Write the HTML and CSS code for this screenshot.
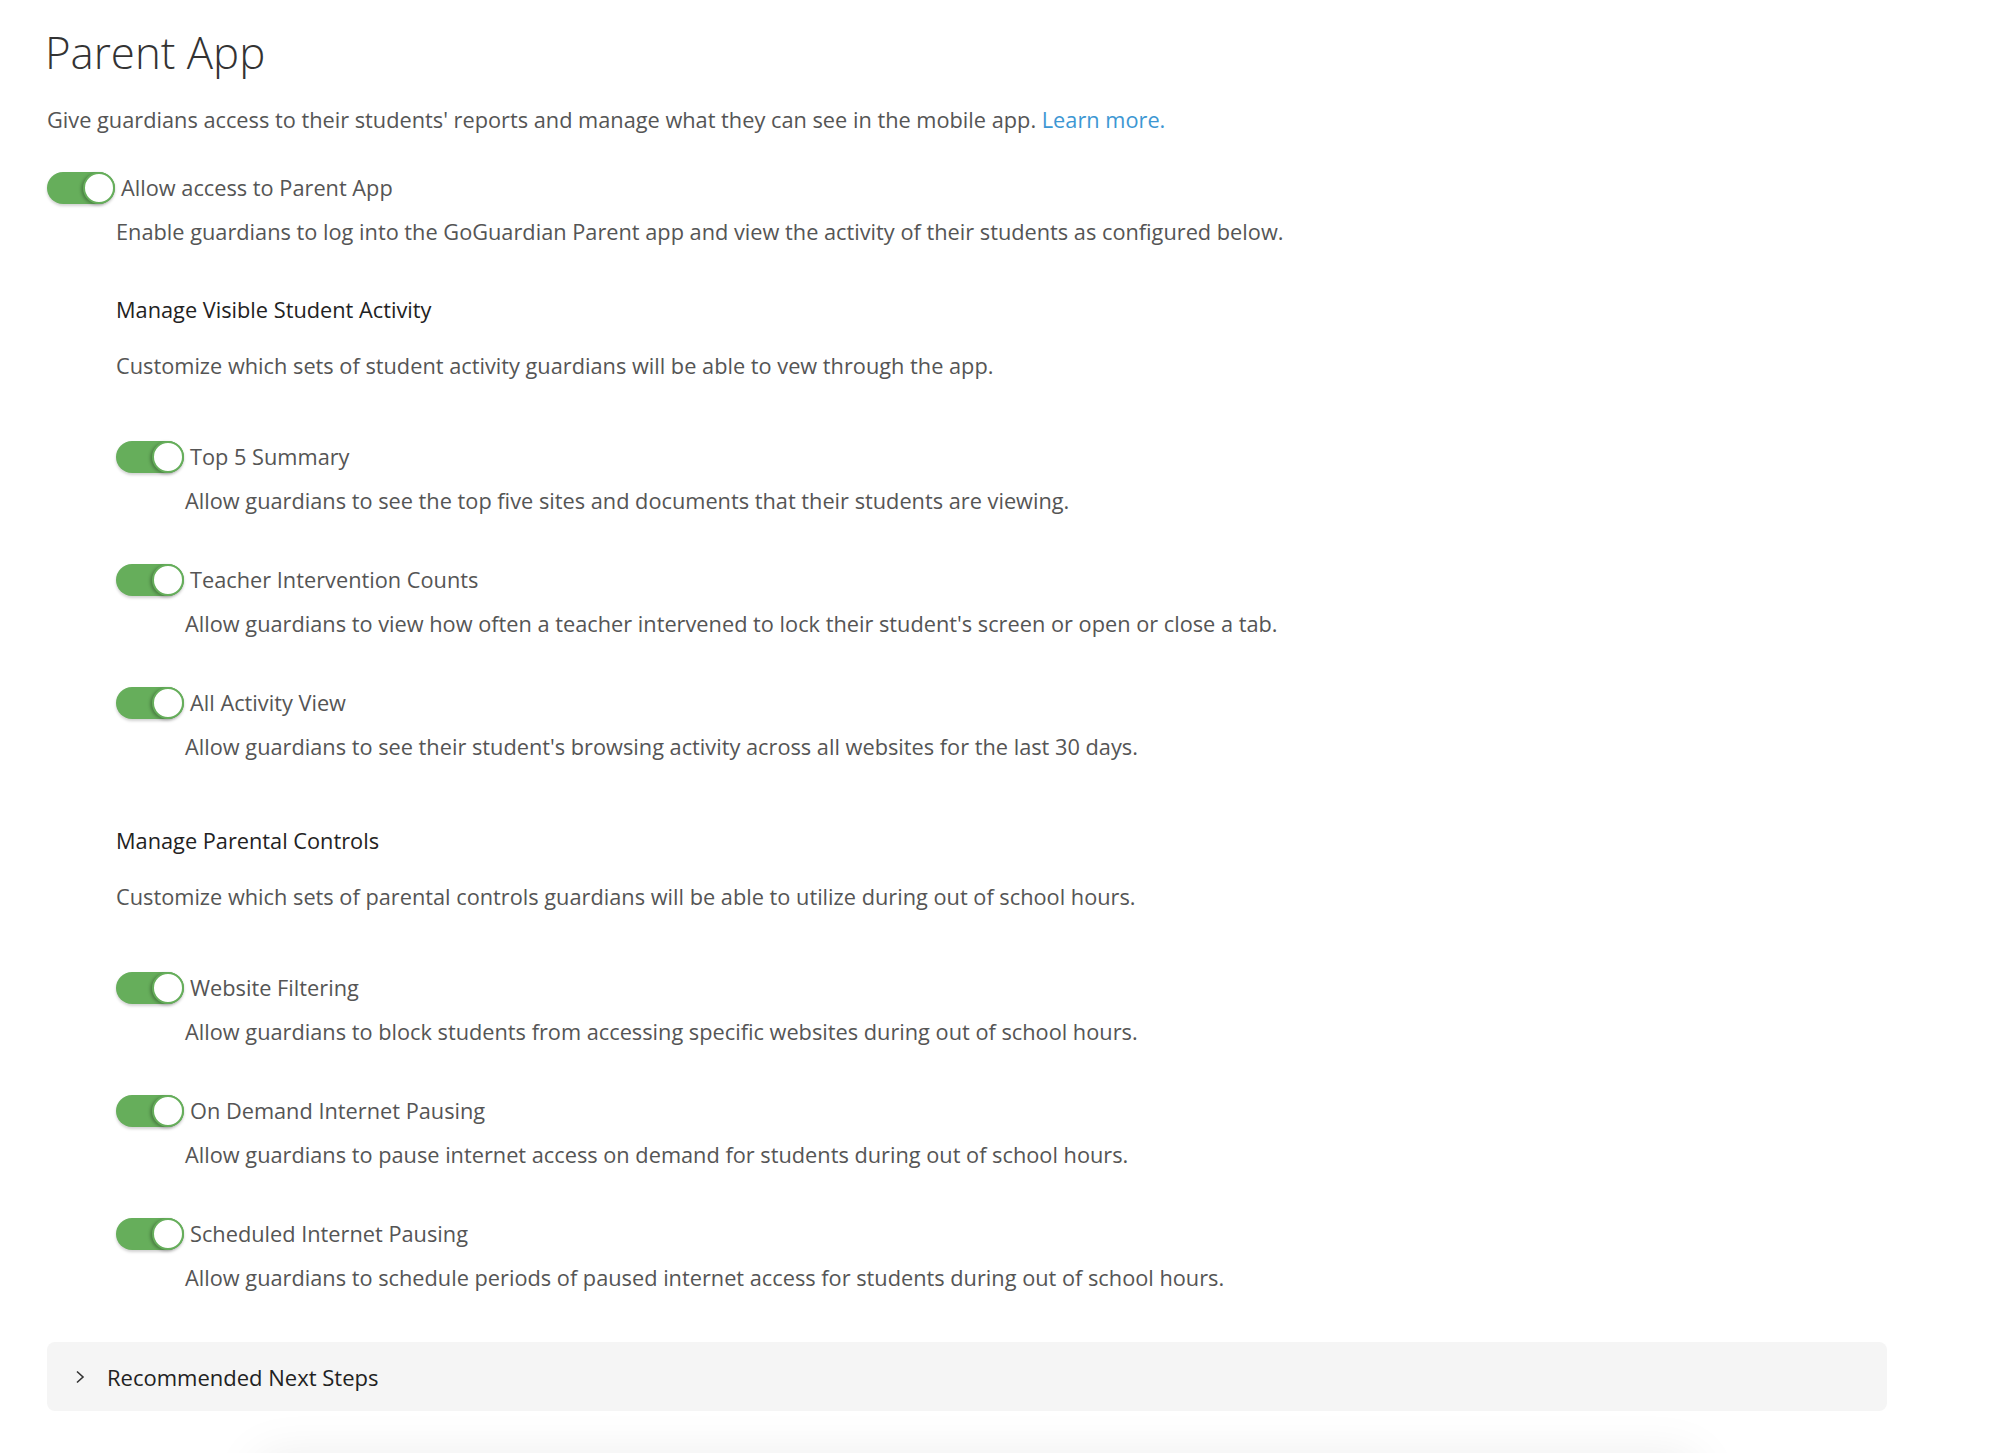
FILE: index.html
```html
<!DOCTYPE html>
<html lang="en">
<head>
<meta charset="utf-8">
<title>Parent App</title>
<link rel="stylesheet" href="styles.css">
</head>
<body>
<main class="page">
  <h1 class="title">Parent App</h1>
  <p class="intro">Give guardians access to their students' reports and manage what they can see in the mobile app. <a class="link" href="#">Learn more.</a></p>

  <div class="setting main-setting">
    <div class="switch-row">
      <span class="toggle"><span class="knob"></span></span>
      <span class="label">Allow access to Parent App</span>
    </div>
    <p class="desc">Enable guardians to log into the GoGuardian Parent app and view the activity of their students as configured below.</p>
  </div>

  <section class="group group-first">
    <h2 class="group-title">Manage Visible Student Activity</h2>
    <p class="group-desc">Customize which sets of student activity guardians will be able to vew through the app.</p>
    <div class="setting">
      <div class="switch-row">
        <span class="toggle"><span class="knob"></span></span>
        <span class="label">Top 5 Summary</span>
      </div>
      <p class="desc">Allow guardians to see the top five sites and documents that their students are viewing.</p>
    </div>
    <div class="setting">
      <div class="switch-row">
        <span class="toggle"><span class="knob"></span></span>
        <span class="label">Teacher Intervention Counts</span>
      </div>
      <p class="desc">Allow guardians to view how often a teacher intervened to lock their student's screen or open or close a tab.</p>
    </div>
    <div class="setting">
      <div class="switch-row">
        <span class="toggle"><span class="knob"></span></span>
        <span class="label">All Activity View</span>
      </div>
      <p class="desc">Allow guardians to see their student's browsing activity across all websites for the last 30 days.</p>
    </div>
  </section>

  <section class="group group-second">
    <h2 class="group-title">Manage Parental Controls</h2>
    <p class="group-desc">Customize which sets of parental controls guardians will be able to utilize during out of school hours.</p>
    <div class="setting">
      <div class="switch-row">
        <span class="toggle"><span class="knob"></span></span>
        <span class="label">Website Filtering</span>
      </div>
      <p class="desc">Allow guardians to block students from accessing specific websites during out of school hours.</p>
    </div>
    <div class="setting">
      <div class="switch-row">
        <span class="toggle"><span class="knob"></span></span>
        <span class="label">On Demand Internet Pausing</span>
      </div>
      <p class="desc">Allow guardians to pause internet access on demand for students during out of school hours.</p>
    </div>
    <div class="setting">
      <div class="switch-row">
        <span class="toggle"><span class="knob"></span></span>
        <span class="label">Scheduled Internet Pausing</span>
      </div>
      <p class="desc">Allow guardians to schedule periods of paused internet access for students during out of school hours.</p>
    </div>
  </section>

  <div class="next-steps">
    <svg class="chevron" width="10" height="14" viewBox="0 0 10 14"><polyline points="2,1.5 8,7 2,12.5" fill="none" stroke="#333" stroke-width="1.6"/></svg>
    <span class="next-title">Recommended Next Steps</span>
  </div>

  <div class="footer-card"></div>
</main>
</body>
</html>
```

FILE: styles.css
```css
html, body {
  margin: 0;
  padding: 0;
  height: 1453px;
  overflow: hidden;
  background: #ffffff;
}

body {
  font-family: "Open Sans", "Noto Sans", sans-serif;
  color: #555555;
  font-size: 21.75px;
  line-height: 28px;
}

.page {
  width: 1840px;
  padding: 27px 0 0 47px;
  display: flex;
  flex-direction: column;
}

.title {
  margin: 0;
  font-size: 43.8px;
  line-height: 50px;
  font-weight: 300;
  color: #333333;
  margin-left: -2px;
}

.intro {
  margin: 29px 0 0 0;
}

.link {
  color: #3d97d3;
  text-decoration: none;
}

.setting {
  display: flex;
  flex-direction: column;
}

.main-setting {
  margin-top: 37px;
}

.switch-row {
  display: flex;
  align-items: center;
  gap: 6px;
  height: 34px;
}

.toggle {
  position: relative;
  width: 68px;
  height: 32px;
  border-radius: 16px;
  background: #66ae5b;
  box-shadow: 0 2px 3px rgba(0, 0, 0, 0.18);
  flex: none;
}

.knob {
  position: absolute;
  top: 0;
  right: 0;
  width: 28px;
  height: 28px;
  border-radius: 50%;
  background: #ffffff;
  border: 2px solid #66ae5b;
  box-shadow: -2px 1px 3px rgba(0, 0, 0, 0.25);
}

.label {
  color: #555555;
}

.desc {
  margin: 13px 0 0 69px;
}

.group {
  margin-left: 69px;
  display: flex;
  flex-direction: column;
}

.group-first {
  margin-top: 50px;
}

.group-second {
  margin-top: 66px;
}

.group-title {
  margin: 0;
  font-size: 21.75px;
  line-height: 28px;
  font-weight: 400;
  color: #222222;
}

.group-desc {
  margin: 28px 0 60px 0;
}

.group .setting + .setting {
  margin-top: 48px;
}

.next-steps {
  margin-top: 50px;
  height: 69px;
  width: 1840px;
  box-sizing: border-box;
  background: #f5f5f5;
  border-radius: 8px;
  display: flex;
  align-items: center;
  padding-left: 28px;
  gap: 22px;
}

.next-title {
  font-size: 22px;
  color: #222222;
}

.footer-card {
  margin: 45px 0 0 210px;
  width: 1440px;
  height: 200px;
  border-radius: 12px;
  background: #ffffff;
  box-shadow: 0 0 50px rgba(0, 0, 0, 0.08);
}
```
